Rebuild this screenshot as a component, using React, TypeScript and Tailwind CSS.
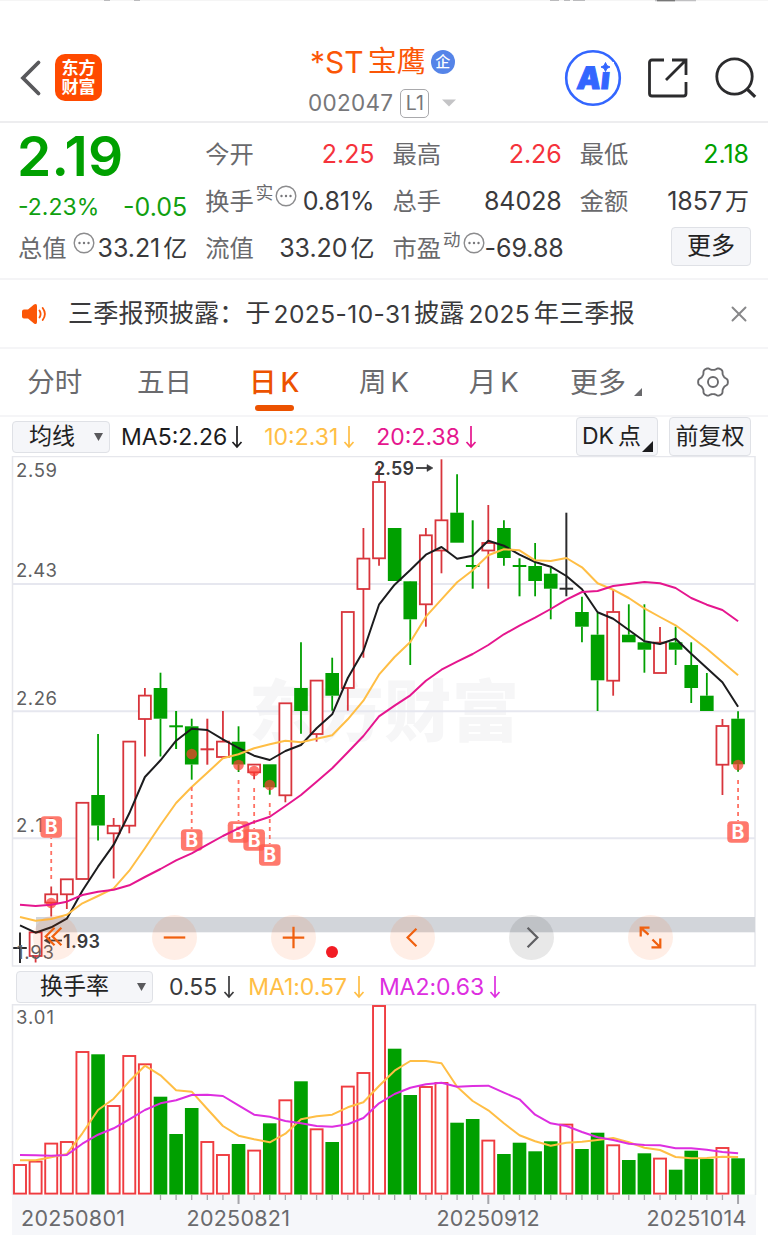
import type { ReactNode } from "react";
import { X } from "lucide-react";

type Tone = "up" | "down" | "flat";
type Candle = {
  tone: Tone;
  high: number;
  top: number;
  bottom: number;
  low: number;
};

const RED = "#d8353c";
const GREEN = "#00a000";
const INK = "#2b2b2d";
const AMBER = "#ffbe45";
const PINK = "#e5168e";
const PURPLE = "#dd2ee0";

const STEP = 15.61;
const xAt = (i: number) => 20 + i * STEP;

const c = (
  tone: Tone,
  high: number,
  top: number,
  bottom: number,
  low: number
): Candle => ({ tone, high, top, bottom, low });

// all chart values are in page-pixel units, top to bottom
const candles: Candle[] = [
  c("flat", 932.5, 948, 948, 963),
  c("up", 931, 932, 956, 962.5),
  c("up", 886.5, 894, 902.7, 916.5),
  c("up", 879, 879, 894.3, 909),
  c("up", 802.5, 802.5, 879, 879),
  c("down", 734, 795, 825.5, 840.5),
  c("up", 818, 825.5, 833.3, 878.5),
  c("up", 741.3, 741.3, 825.7, 833.3),
  c("up", 688, 695.3, 719, 756.5),
  c("down", 672.7, 688, 718.7, 756.5),
  c("down", 711, 726.3, 726.3, 749),
  c("down", 718.7, 726.3, 764.5, 779.7),
  c("up", 718.7, 749.3, 749.3, 764.7),
  c("up", 711, 741.3, 757, 757),
  c("down", 726.3, 741.7, 764.5, 772),
  c("up", 764.3, 764.3, 772.3, 779.3),
  c("down", 764.3, 764.3, 787.3, 794.7),
  c("up", 703, 703, 795.3, 802.3),
  c("down", 642.3, 688, 711, 733.7),
  c("up", 680.3, 680.3, 734, 741.7),
  c("down", 657.7, 673, 695.7, 710.7),
  c("up", 611.7, 611.7, 688, 710.7),
  c("up", 528, 558.3, 589, 657.7),
  c("up", 466, 481.7, 558.3, 565.7),
  c("down", 528, 528, 581, 581),
  c("down", 581, 581.3, 619.3, 665),
  c("up", 528, 535, 604.3, 626.7),
  c("up", 459.3, 520, 550.5, 573.3),
  c("down", 474.3, 512.7, 542.7, 542.7),
  c("down", 520.3, 566, 566, 588.7),
  c("up", 505, 542.7, 550.5, 588.7),
  c("down", 520.3, 528, 558, 565.7),
  c("down", 558.3, 566, 566, 596.3),
  c("down", 543, 566, 581, 596.3),
  c("down", 567.7, 573.7, 588.7, 619.3),
  c("flat", 512.7, 588.7, 588.7, 596.3),
  c("down", 596.7, 612, 626.7, 642.3),
  c("down", 612.7, 634.7, 680.3, 711),
  c("up", 590, 611.7, 680.7, 695.7),
  c("down", 604.3, 634.7, 642.3, 642.3),
  c("down", 604.3, 642.3, 649.7, 672.7),
  c("up", 627, 642.3, 673, 673),
  c("down", 626.7, 642.3, 649.7, 665),
  c("down", 642.3, 665, 688, 703),
  c("down", 673, 695.7, 711, 711),
  c("up", 719, 725.7, 764.7, 795),
  c("down", 711.3, 718.7, 764.3, 771.7),
];

const ma5 = [
  925.3, 932.7, 927.3, 918.7, 890.7, 866.7, 844.7, 813.3, 777, 760.3, 740.7,
  728.7, 730, 739.3, 748, 755.7, 760, 751, 745, 728.3, 714.3, 678, 651, 604.7,
  584.7, 570, 554.7, 547, 558.7, 555.7, 540.7, 545.7, 554.7, 562, 566.7, 576,
  589.3, 612.3, 618.7, 630, 641.3, 644, 638.7, 653.7, 668, 682.3, 706.7,
];
const ma10 = [
  917, 920.7, 919, 914.7, 903.3, 896, 888.3, 870.7, 848.3, 825, 803, 787,
  772.7, 758.3, 754.3, 748.3, 744.3, 740.7, 742.3, 738.7, 735.3, 719.3, 700.7,
  674.7, 657, 642, 616.7, 599.3, 582.3, 570.3, 555.3, 549.3, 550.3, 560.3, 561,
  558, 567.3, 583.3, 589.7, 598, 608.3, 617, 625.3, 636.7, 648.7, 662, 675.3,
];
const ma20 = [
  904.7, 906, 904.7, 901.7, 895, 891.7, 889.7, 885.3, 877, 869, 860.3, 853.3,
  844.7, 836, 828.3, 822, 816.7, 806, 795, 781.7, 768.3, 752.3, 736, 716.3,
  705.7, 695.3, 680.7, 669.7, 661.7, 654, 645, 634.3, 625.7, 617.7, 609, 599.7,
  592, 591, 586, 584, 582, 583.3, 588, 598, 604.7, 610, 621.3,
];

const volumes = [
  1164.7, 1161.3, 1143.3, 1141.7, 1051.7, 1054.3, 1105.7, 1055.7, 1064, 1096.7,
  1134, 1108, 1141.7, 1154.7, 1144, 1150.3, 1123.3, 1100, 1081.3, 1129, 1142,
  1086.3, 1072.7, 1005.7, 1048.7, 1095, 1086.7, 1082.7, 1122.7, 1119, 1140.3,
  1154, 1142.7, 1151.3, 1141.3, 1124.3, 1149, 1132.7, 1145, 1160, 1153.3,
  1158.3, 1169.7, 1150.7, 1159, 1147.7, 1158.3,
];
const volMa1 = [
  1160.3, 1160.3, 1157.3, 1154, 1133.3, 1110, 1098.7, 1081.3, 1065.7, 1075.3,
  1090.3, 1091.7, 1109, 1126, 1135.7, 1139.3, 1142.3, 1133.7, 1119.3, 1116.3,
  1114.7, 1107.3, 1102.3, 1086, 1070.7, 1061, 1061, 1063.3, 1086.7, 1101,
  1110.3, 1123.3, 1135.3, 1141.3, 1145.7, 1142.7, 1141.7, 1140, 1138, 1142.3,
  1147.7, 1150, 1157, 1158.3, 1158, 1156.7, 1157,
];
const volMa2 = [
  1155, 1155.3, 1155.7, 1155, 1143.7, 1134.7, 1128.3, 1119.3, 1110, 1103.3,
  1100.3, 1095, 1094.7, 1096, 1105.3, 1114.7, 1116.7, 1121, 1123.3, 1126,
  1126.7, 1124.3, 1118, 1103.3, 1094, 1087.7, 1084.3, 1082.7, 1086.7, 1086,
  1085.7, 1092.7, 1099.3, 1114.7, 1123.3, 1126, 1132, 1137.3, 1140, 1143.7,
  1145, 1145.3, 1148.3, 1148.3, 1149.7, 1152, 1153.3,
];

// buy markers: candle index, dot y, badge y, first dash y
const buys = [
  { i: 2, dot: 903, badge: 827, from: 879 },
  { i: 11, dot: 754, badge: 840, from: 787 },
  { i: 14, dot: 765, badge: 832, from: 780 },
  { i: 15, dot: 771, badge: 840, from: 788 },
  { i: 16, dot: 785, badge: 855, from: 803 },
  { i: 46, dot: 765, badge: 832, from: 780 },
];

const toPoints = (ys: number[]) =>
  ys.map((y, i) => `${xAt(i).toFixed(1)},${y}`).join(" ");

function Line({ ys, color }: { ys: number[]; color: string }) {
  return (
    <polyline
      points={toPoints(ys)}
      fill="none"
      stroke={color}
      strokeWidth={2}
      strokeLinejoin="round"
    />
  );
}

function CandleShape({ data, x }: { data: Candle; x: number }) {
  const { tone, high, top, bottom, low } = data;
  const color = tone === "up" ? RED : tone === "down" ? GREEN : INK;

  if (top === bottom) {
    return (
      <g stroke={color} strokeWidth={2}>
        <line x1={x} x2={x} y1={high} y2={low} />
        <line x1={x - 6.8} x2={x + 6.8} y1={top} y2={top} />
      </g>
    );
  }
  return (
    <g stroke={color} strokeWidth={1.8}>
      <line x1={x} x2={x} y1={high} y2={top} />
      <line x1={x} x2={x} y1={bottom} y2={low} />
      {tone === "up" ? (
        <rect
          x={x - 6}
          y={top + 0.3}
          width={12}
          height={bottom - top - 0.3}
          fill="white"
        />
      ) : (
        <rect
          x={x - 6.8}
          y={top}
          width={13.6}
          height={bottom - top}
          fill={color}
          stroke="none"
        />
      )}
    </g>
  );
}

function DownArrow({ className = "" }: { className?: string }) {
  return (
    <svg
      width="12"
      height="24"
      viewBox="0 0 12 24"
      fill="none"
      stroke="currentColor"
      strokeWidth="1.700"
      className={className}
    >
      <path d="M6 1V22M1.500 17 6 22l4.500-5" />
    </svg>
  );
}

function Dots() {
  return (
    <svg width="22" height="22" viewBox="0 0 22 22" className="shrink-0">
      <circle
        cx="11"
        cy="11"
        r="9.800"
        fill="none"
        stroke="#8c8c8e"
        strokeWidth="1.400"
      />
      <g fill="#77777a">
        <circle cx="6.500" cy="11" r="1.200" />
        <circle cx="11" cy="11" r="1.200" />
        <circle cx="15.500" cy="11" r="1.200" />
      </g>
    </svg>
  );
}

function Stat({
  label,
  sup,
  dots = false,
  value,
  unit,
  color = "text-[#3a3a3c]",
}: {
  label: string;
  sup?: string;
  dots?: boolean;
  value: string;
  unit?: string;
  color?: string;
}) {
  return (
    <div className="-ml-px flex h-[47px] items-center whitespace-nowrap">
      <span className="text-[24.300px] text-[#69696c]">{label}</span>
      {sup && (
        <span className="mb-[17px] ml-[2px] text-[17.500px] leading-none text-[#69696c]">
          {sup}
        </span>
      )}
      {dots && (
        <span className={sup ? "mb-[11px] ml-[2px]" : "mb-[11px] ml-[6px]"}>
          <Dots />
        </span>
      )}
      <span
        className={`ml-auto flex items-center text-[25px] tracking-[-0.050px] ${color}`}
      >
        {value}
        {unit && <span className="ml-[3px] text-[24px] tracking-normal">{unit}</span>}
      </span>
    </div>
  );
}

function Header() {
  return (
    <header className="h-[123px] border-b-2 border-[#ededef]">
      <svg width="768" height="3" viewBox="0 0 768 3" className="block">
        <path d="M0 .5H768" stroke="#f5f5f5" />
        <path
          d="M104 0h6M134 0h6M550 0h9M564 0h6M573 0h12"
          stroke="#a8a8aa"
          strokeWidth="1.600"
        />
        <path d="M655 0h41" stroke="#c0c0c2" strokeWidth="2.600" />
        <path d="M657 0h18" stroke="#777" strokeWidth="2.600" />
      </svg>
      <div className="flex h-[118px] items-start">
        <svg
          width="24"
          height="38"
          viewBox="0 0 24 38"
          fill="none"
          stroke="#59595c"
          strokeWidth="3.800"
          className="mt-[56px] ml-[19px]"
        >
          <path d="M19.500 3.500 4 19l15.500 15.500" strokeLinecap="round" />
        </svg>
        <div className="mt-[51px] ml-[12px] flex size-[47px] flex-col items-center justify-center rounded-[10px] bg-[#ff4a00] text-[17px] leading-[19px] font-bold text-white">
          <span>东方</span>
          <span>财富</span>
        </div>

        <div className="mt-[39px] ml-[206px] w-[150px]">
          <div className="flex h-[40px] items-center whitespace-nowrap text-[#fb5607]">
            <span className="ml-[2px] text-[30px]">*ST</span>
            <span className="ml-[4px] text-[29px]">宝鹰</span>
            <span className="ml-[5px] flex size-[24px] items-center justify-center rounded-full bg-[#5584e8] text-[15px] font-medium text-white">
              企
            </span>
          </div>
          <div className="mt-[6px] flex h-[30px] items-center text-[#77777a]">
            <span className="text-[22.500px] tracking-[0.300px]">002047</span>
            <span className="ml-[7px] flex h-[29px] w-[29px] items-center justify-center rounded-[5px] border-[1.500px] border-[#a9a9ac] pt-[2px] text-[19.500px] leading-none">
              L1
            </span>
            <svg width="14" height="8" viewBox="0 0 14 8" className="ml-[13px]">
              <path d="M0 .5h14L7 7.500z" fill="#c4c4c6" />
            </svg>
          </div>
        </div>

        <svg
          width="58"
          height="58"
          viewBox="0 0 58 58"
          className="mt-[46px] ml-[106px]"
        >
          <circle
            cx="29"
            cy="29"
            r="26.800"
            fill="none"
            stroke="#3366ff"
            strokeWidth="2.600"
          />
          <text
            transform="translate(12 39.500) skewX(-6)"
            fontSize="31"
            fontWeight="900"
            fill="#3366ff"
            stroke="#3366ff"
            strokeWidth="1"
            textLength="33"
            lengthAdjust="spacingAndGlyphs"
          >
            Ai
          </text>
          <rect x="36" y="13" width="14" height="9.800" fill="white" />
          <path
            d="m41.500 13.500 1.400 3.100 3.100 1.400-3.100 1.400-1.400 3.100-1.400-3.100L37 18l3.100-1.400z"
            fill="#3366ff"
            stroke="#3366ff"
          />
        </svg>

        <svg
          width="42"
          height="42"
          viewBox="0 0 42 42"
          fill="none"
          stroke="#2b2b2d"
          strokeWidth="2.800"
          className="mt-[54px] ml-[25px]"
        >
          <path d="M17 3H5Q2.500 3 2.500 5.500V36.500Q2.500 39 5 39H36.500Q39 39 39 36.500V25" />
          <path d="M25 3H39V18M38.500 3.500 19 23" />
        </svg>

        <svg
          width="42"
          height="42"
          viewBox="0 0 42 42"
          fill="none"
          stroke="#2b2b2d"
          strokeWidth="2.800"
          className="mt-[54px] ml-[26px]"
        >
          <circle cx="19.500" cy="19.500" r="17.700" />
          <path d="m31.500 31.500 8.700 8.300" strokeWidth="3.200" />
        </svg>
      </div>
    </header>
  );
}

function Quote() {
  return (
    <section className="h-[157px] border-b-2 border-[#f4f4f6] px-[19px] pt-[8px]">
      <div className="grid grid-cols-4 gap-x-[19px]">
        <div className="-ml-[2px] flex h-[47px] items-center pt-[4px] text-[55px] font-semibold tracking-[0.300px] text-[#00a000]">
          2.19
        </div>
        <Stat label="今开" value="2.25" color="text-[#f5333c]" />
        <Stat label="最高" value="2.26" color="text-[#f5333c]" />
        <Stat label="最低" value="2.18" color="text-[#00a000]" />

        <div className="-ml-px flex h-[47px] items-center justify-between pt-[12px] text-[#10a010]">
          <span className="text-[23px]">-2.23%</span>
          <span className="text-[25px]">-0.05</span>
        </div>
        <Stat label="换手" sup="实" dots value="0.81%" />
        <Stat label="总手" value="84028" />
        <Stat label="金额" value="1857" unit="万" />

        <Stat label="总值" dots value="33.21" unit="亿" />
        <Stat label="流值" value="33.20" unit="亿" />
        <Stat label="市盈" sup="动" dots value="-69.88" />
        <div className="flex h-[47px] items-center justify-end">
          <button className="-mt-[5px] -mr-[2px] h-[39px] w-[80px] rounded-[4px] border border-[#dfe1e6] bg-[#f5f6f9] text-[24px] leading-none text-[#222]">
            更多
          </button>
        </div>
      </div>
    </section>
  );
}

function Notice() {
  return (
    <section className="flex h-[69px] items-center border-b-2 border-[#f5f5f7] pt-px text-[25.200px] whitespace-nowrap text-[#3a3a3c]">
      <svg width="27" height="22" viewBox="0 0 27 22" className="ml-[21px]">
        <path
          d="M3 6.500H7L13 1.500Q16 0 16 3V19Q16 22 13 20.500L7 15.500H3Q1 15.500 1 13.500V8.500Q1 6.500 3 6.500Z"
          fill="#fb5607"
        />
        <path
          d="M18.500 7.500q2.200 3.500 0 7M21.700 5q4.400 6 0 12"
          fill="none"
          stroke="#fb5607"
          strokeWidth="1.800"
          strokeLinecap="round"
        />
      </svg>
      <span className="ml-[20px]">三季报预披露：</span>
      <span className="ml-px">于</span>
      <span className="ml-[3px] text-[24.500px] tracking-[0.450px]">2025-10-31</span>
      <span className="ml-[3px]">披露</span>
      <span className="ml-[4px] text-[24.500px] tracking-[0.300px]">2025</span>
      <span className="ml-[4px]">年三季报</span>
      <X
        size={26}
        strokeWidth={1.800}
        className="mr-[16px] ml-auto text-[#88888a]"
      />
    </section>
  );
}

function Gear() {
  const pts = Array.from({ length: 120 }, (_, k) => {
    const a = (k * Math.PI) / 60;
    const r = 13.5 + 1.5 * Math.tanh(1.5 * Math.cos(6 * a));
    return `${(17 + r * Math.cos(a)).toFixed(2)},${(17 + r * Math.sin(a)).toFixed(2)}`;
  }).join(" ");
  return (
    <svg
      width="34"
      height="34"
      viewBox="0 0 34 34"
      fill="none"
      stroke="#6a6a6d"
      strokeWidth="1.900"
    >
      <polygon points={pts} strokeLinejoin="round" />
      <circle cx="17" cy="17" r="5" />
    </svg>
  );
}

const tabs = ["分时", "五日", "日K", "周K", "月K", "更多"];

function Tabs() {
  return (
    <nav className="grid h-[68px] grid-cols-7 border-b-2 border-[#f5f5f7] text-[27.500px] text-[#6a6a6d]">
      {tabs.map((tab) => {
        const active = tab === "日K";
        return (
          <div
            key={tab}
            className={`relative flex items-center justify-center pt-[2px] whitespace-nowrap ${
              active ? "font-medium text-[#ec5200]" : ""
            }`}
          >
            {tab.endsWith("K") ? (
              <span className="flex items-center gap-[4px]">
                {tab[0]}
                <span>K</span>
              </span>
            ) : (
              <span className={tab === "更多" ? "ml-[5px] text-[28px]" : ""}>
                {tab}
              </span>
            )}
            {tab === "更多" && (
              <svg width="8" height="8" viewBox="0 0 8 8" className="mt-[18px] ml-[8px]">
                <path d="M8 0V8H0z" fill="#69696c" />
              </svg>
            )}
            {active && (
              <span className="absolute bottom-[4px] h-[6px] w-[39px] rounded-full bg-[#ec5200]" />
            )}
          </div>
        );
      })}
      <div className="flex items-center justify-center pr-px">
        <Gear />
      </div>
    </nav>
  );
}

function Select({ className, children }: { className: string; children: ReactNode }) {
  return (
    <button
      className={`flex h-[32px] items-center justify-between rounded-[4px] border border-[#dfe1e6] bg-[#f5f6f9] text-[23px] leading-none text-[#222] ${className}`}
    >
      {children}
      <svg width="9" height="8" viewBox="0 0 9 8">
        <path d="M0 0h9L4.500 8z" fill="#59595c" />
      </svg>
    </button>
  );
}

function MaBar() {
  return (
    <div className="flex h-[39px] items-center pl-[12px] text-[23px] whitespace-nowrap">
      <Select className="w-[98px] pr-[6px] pl-[16px]">均线</Select>
      <span className="ml-[11px] pt-px text-[#1c1c1e]">MA5:2.26</span>
      <DownArrow className="ml-[4px] text-[#1c1c1e]" />
      <span className="ml-[21px] pt-px text-[#ffbe45]">10:2.31</span>
      <DownArrow className="ml-[5px] text-[#ffbe45]" />
      <span className="ml-[21px] pt-px text-[#e5168e]">20:2.38</span>
      <DownArrow className="ml-[5px] text-[#e5168e]" />
      <button className="mr-[11px] ml-auto flex h-[39px] w-[82px] items-center rounded-[4px] border border-[#dfe1e6] bg-[#f5f6f9] pl-[5px] text-[23px] leading-none text-[#222]">
        DK<span className="ml-[4px]">点</span>
        <svg width="11" height="11" viewBox="0 0 11 11" className="mt-[20px] ml-px shrink-0">
          <path d="M11 0V11H0z" fill="#1c1c1e" />
        </svg>
      </button>
      <button className="mr-[17px] h-[39px] w-[82px] rounded-[4px] border border-[#dfe1e6] bg-[#f5f6f9] text-[23px] leading-none text-[#222]">
        前复权
      </button>
    </div>
  );
}

const controls = [
  { id: "first", d: "M22 13l-9 9 9 9M29 13l-9 9 9 9" },
  { id: "minus", d: "M12 23h22" },
  { id: "plus", d: "M12 23h22M23 12v22" },
  { id: "prev", d: "M27 14l-9 9 9 9" },
  { id: "next", d: "M19 13l10 10-10 10" },
  { id: "expand", d: "M13 22V13h9M13 13l8 7M33 24v9h-9M33 33l-8-8" },
];

function PriceChart() {
  return (
    <div className="relative h-[511px]">
      <svg
        width="768"
        height="511"
        viewBox="0 456 768 511"
        className="block"
        fontFamily="Inter, 'Noto Sans CJK SC', sans-serif"
      >
        <text
          x="249"
          y="736"
          fontSize="67"
          fontWeight="900"
          fill="#f6f6f7"
          textLength="270"
        >
          东方财富
        </text>
        <g stroke="#e6e7ef" strokeWidth="2">
          <path d="M13 584H755M13 711.300H755M13 838.300H755" />
        </g>
        <rect
          x="12.500"
          y="456.500"
          width="742.500"
          height="509.500"
          fill="none"
          stroke="#e6e7ec"
          strokeWidth="1.500"
        />
        <rect x="36" y="917" width="719" height="15.300" fill="#d2d5da" />

        {candles.map((item, i) => (
          <CandleShape key={i} data={item} x={xAt(i)} />
        ))}
        <g fontSize="18.500" fill="#5f5f62">
          <text x="16" y="477" textLength="41">2.59</text>
          <text x="16" y="577" textLength="41">2.43</text>
          <text x="16" y="705" textLength="41">2.26</text>
          <text x="16" y="832" textLength="41">2.10</text>
          <text x="16" y="959" textLength="38">1.93</text>
        </g>
        <Line ys={ma5} color="#1c1c1e" />
        <Line ys={ma10} color={AMBER} />

        {buys.map(({ i, dot, badge, from }) => (
          <g key={i}>
            <line
              x1={xAt(i)}
              x2={xAt(i)}
              y1={from}
              y2={badge > dot ? badge - 11 : badge + 11}
              stroke="#ff7163"
              strokeWidth="1.800"
              strokeDasharray="4 4"
            />
            <circle cx={xAt(i)} cy={dot} r="5.300" fill="#ff3b30" fillOpacity="0.700" />
            <rect
              x={xAt(i) - 10.800}
              y={badge - 10.800}
              width="21.600"
              height="21.600"
              rx="4"
              fill="#ff5c4d"
              fillOpacity="0.820"
            />
            <text
              x={xAt(i)}
              y={badge + 7}
              fontSize="19.500"
              fontWeight="700"
              fill="white"
              textAnchor="middle"
            >
              B
            </text>
          </g>
        ))}
        <Line ys={ma20} color={PINK} />

        <g fontSize="18" fontWeight="600" fill="#3a3a3c">
          <text x="374" y="475" textLength="40">2.59</text>
          <text x="63" y="947.500" textLength="37">1.93</text>
        </g>
        <g fill="#3a3a3c" stroke="#3a3a3c" strokeWidth="1.800">
          <path d="M416 468H429" />
          <path d="M427 464.500L433 468L427 471.500z" strokeWidth="0.500" />
          <path d="M49 940.500H62" />
          <path d="M50 937L44 940.500L50 944z" strokeWidth="0.500" />
        </g>
      </svg>

      {/* floating chart controls */}
      <div className="absolute top-[459px] left-[33px] flex gap-[73px]">
        {controls.map(({ id, d }) => (
          <button
            key={id}
            className={`size-[45px] rounded-full ${
              id === "next" ? "bg-[#222222]/10" : "bg-[#fb5607]/10"
            } mr-px last:mr-0`}
          >
            <svg
              width="45"
              height="45"
              viewBox="0 0 46 46"
              fill="none"
              stroke={id === "next" ? "#5f5f62" : "#f0600f"}
              strokeWidth="2.300"
            >
              <path d={d} />
            </svg>
          </button>
        ))}
      </div>
      <span className="absolute top-[490px] left-[326px] size-[12px] rounded-full bg-[#f21c24]" />
    </div>
  );
}

function VolumeBar() {
  return (
    <div className="flex h-[37px] items-center pt-[2px] pl-[16px] text-[23px] whitespace-nowrap">
      <Select className="w-[137px] pr-[6px] pl-[23px]">换手率</Select>
      <span className="ml-[16px] pt-px text-[#3a3a3c]">0.55</span>
      <DownArrow className="ml-[6px] text-[#3a3a3c]" />
      <span className="ml-[13px] pt-px tracking-[-0.050px] text-[#ffbe45]">MA1:0.57</span>
      <DownArrow className="ml-[6px] text-[#ffbe45]" />
      <span className="ml-[14px] pt-px tracking-[-0.050px] text-[#dd2ee0]">MA2:0.63</span>
      <DownArrow className="ml-[5px] text-[#dd2ee0]" />
    </div>
  );
}

function VolumeChart() {
  return (
    <svg
      width="768"
      height="232"
      viewBox="0 1004 768 232"
      className="block"
      fontFamily="Inter, 'Noto Sans CJK SC', sans-serif"
    >
      <rect x="12" y="1194.500" width="744" height="40.500" fill="#f6f7fa" />
      <path
        d="M12.500 1195V1004.800H755.500V1195"
        fill="none"
        stroke="#e6e7ec"
        strokeWidth="1.500"
      />
      <text x="16" y="1024" fontSize="18.500" fill="#5f5f62" textLength="38">
        3.01
      </text>
      {volumes.map((y, i) => {
        const x = xAt(i);
        return candles[i].tone === "down" ? (
          <rect key={i} x={x - 6.800} y={y} width={13.600} height={1194.500 - y} fill={GREEN} />
        ) : (
          <rect
            key={i}
            x={x - 6}
            y={y + 0.300}
            width={12}
            height={1193.300 - y}
            fill="white"
            stroke="#ef3b3f"
            strokeWidth={1.900}
          />
        );
      })}
      <Line ys={volMa1} color={AMBER} />
      <Line ys={volMa2} color={PURPLE} />
      <g stroke="#a5a5aa">
        {volumes.slice(9).map((_, k) => {
          const i = k + 9;
          const major = i === 14 || i === 30 || i === 46;
          return (
            <line
              key={i}
              x1={xAt(i)}
              x2={xAt(i)}
              y1={1195}
              y2={major ? 1204 : 1200}
              strokeWidth={major ? 2 : 1.300}
            />
          );
        })}
      </g>
      <g fontSize="21.500" fill="#6a6a6d">
        <text x="21" y="1225.500" textLength="104">20250801</text>
        <text x="186.500" y="1225.500" textLength="103.500">20250821</text>
        <text x="436.500" y="1225.500" textLength="103">20250912</text>
        <text x="646.500" y="1225.500" textLength="100">20251014</text>
      </g>
    </svg>
  );
}

export default function App() {
  return (
    <main className="h-[1236px] w-[768px] overflow-hidden bg-white font-['Inter','Noto_Sans_CJK_SC',sans-serif]">
      <Header />
      <Quote />
      <Notice />
      <Tabs />
      <MaBar />
      <PriceChart />
      <VolumeBar />
      <VolumeChart />
    </main>
  );
}
